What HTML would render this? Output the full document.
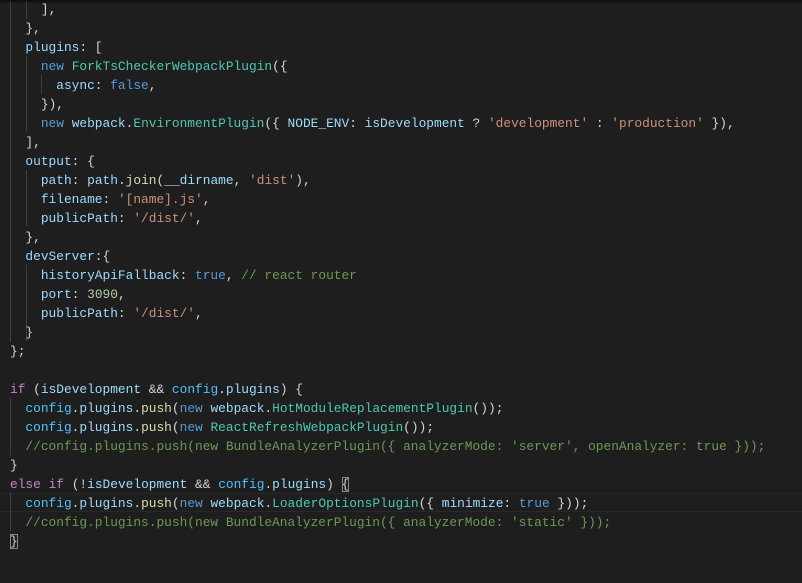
<!DOCTYPE html>
<html><head><meta charset="utf-8"><style>
html,body{margin:0;padding:0;background:#1e1e1e;width:802px;height:583px;overflow:hidden}
#c{position:absolute;left:10px;top:0px;font-family:"Liberation Mono",monospace;font-size:12.85px;color:#d4d4d4}
.l{height:19px;line-height:19px;white-space:pre;position:relative}
.k{color:#9cdcfe}.n{color:#569cd6}.t{color:#4ec9b0}.s{color:#ce9178}.c{color:#6a9955}.f{color:#dcdcaa}.p{color:#c586c0}.v{color:#4fc1ff}.y,.m,.b{color:#d4d4d4}
.g{position:absolute;top:0;width:1px;background:#404040}
#cur{position:absolute;left:0;top:493px;width:802px;height:17px;border-top:1px solid #282828;border-bottom:1px solid #282828}
.box{outline:1px solid #888;outline-offset:-1px}
#sh{position:absolute;left:0;top:0;width:802px;height:4px;background:linear-gradient(#000,transparent);opacity:.6}
</style></head><body>
<div id="cur"></div>
<div class="g" style="left:10px;top:0;height:342px"></div>
<div class="g" style="left:26px;top:0;height:19px"></div>
<div class="g" style="left:26px;top:56px;height:76px"></div>
<div class="g" style="left:41px;top:75px;height:19px"></div>
<div class="g" style="left:26px;top:170px;height:57px"></div>
<div class="g" style="left:26px;top:265px;height:76px"></div>
<div class="g" style="left:10px;top:398px;height:57px"></div>
<div class="g" style="left:10px;top:493px;height:38px"></div>
<div id="c">
<div class="l">    <span class="b">]</span>,</div>
<div class="l">  <span class="m">}</span>,</div>
<div class="l">  <span class="k">plugins</span>: <span class="m">[</span></div>
<div class="l">    <span class="n">new</span> <span class="t">ForkTsCheckerWebpackPlugin</span><span class="b">(</span><span class="y">{</span></div>
<div class="l">      <span class="k">async</span>: <span class="n">false</span>,</div>
<div class="l">    <span class="y">}</span><span class="b">)</span>,</div>
<div class="l">    <span class="n">new</span> <span class="k">webpack</span>.<span class="t">EnvironmentPlugin</span><span class="b">(</span><span class="y">{</span> <span class="k">NODE_ENV</span>: <span class="k">isDevelopment</span> ? <span class="s">'development'</span> : <span class="s">'production'</span> <span class="y">}</span><span class="b">)</span>,</div>
<div class="l">  <span class="m">]</span>,</div>
<div class="l">  <span class="k">output</span>: <span class="m">{</span></div>
<div class="l">    <span class="k">path</span>: <span class="k">path</span>.<span class="f">join</span><span class="b">(</span><span class="k">__dirname</span>, <span class="s">'dist'</span><span class="b">)</span>,</div>
<div class="l">    <span class="k">filename</span>: <span class="s">'[name].js'</span>,</div>
<div class="l">    <span class="k">publicPath</span>: <span class="s">'/dist/'</span>,</div>
<div class="l">  <span class="m">}</span>,</div>
<div class="l">  <span class="k">devServer</span>:<span class="m">{</span></div>
<div class="l">    <span class="k">historyApiFallback</span>: <span class="n">true</span>, <span class="c">// react router</span></div>
<div class="l">    <span class="k">port</span>: <span class="s" style="color:#b5cea8">3090</span>,</div>
<div class="l">    <span class="k">publicPath</span>: <span class="s">'/dist/'</span>,</div>
<div class="l">  <span class="m">}</span></div>
<div class="l"><span class="y">}</span>;</div>
<div class="l"> </div>
<div class="l"><span class="p">if</span> <span class="y">(</span><span class="k">isDevelopment</span> &amp;&amp; <span class="v">config</span>.<span class="k">plugins</span><span class="y">)</span> <span class="y">{</span></div>
<div class="l">  <span class="v">config</span>.<span class="k">plugins</span>.<span class="f">push</span><span class="m">(</span><span class="n">new</span> <span class="k">webpack</span>.<span class="t">HotModuleReplacementPlugin</span><span class="b">()</span><span class="m">)</span>;</div>
<div class="l">  <span class="v">config</span>.<span class="k">plugins</span>.<span class="f">push</span><span class="m">(</span><span class="n">new</span> <span class="t">ReactRefreshWebpackPlugin</span><span class="b">()</span><span class="m">)</span>;</div>
<div class="l">  <span class="c">//config.plugins.push(new BundleAnalyzerPlugin({ analyzerMode: 'server', openAnalyzer: true }));</span></div>
<div class="l"><span class="y">}</span></div>
<div class="l"><span class="p">else</span> <span class="p">if</span> <span class="y">(</span>!<span class="k">isDevelopment</span> &amp;&amp; <span class="v">config</span>.<span class="k">plugins</span><span class="y">)</span> <span class="y box">{</span></div>
<div class="l">  <span class="v">config</span>.<span class="k">plugins</span>.<span class="f">push</span><span class="m">(</span><span class="n">new</span> <span class="k">webpack</span>.<span class="t">LoaderOptionsPlugin</span><span class="b">(</span><span class="y">{</span> <span class="k">minimize</span>: <span class="n">true</span> <span class="y">}</span><span class="b">)</span><span class="m">)</span>;</div>
<div class="l">  <span class="c">//config.plugins.push(new BundleAnalyzerPlugin({ analyzerMode: 'static' }));</span></div>
<div class="l"><span class="y box">}</span></div>
</div>
<div id="sh"></div>
</body></html>
